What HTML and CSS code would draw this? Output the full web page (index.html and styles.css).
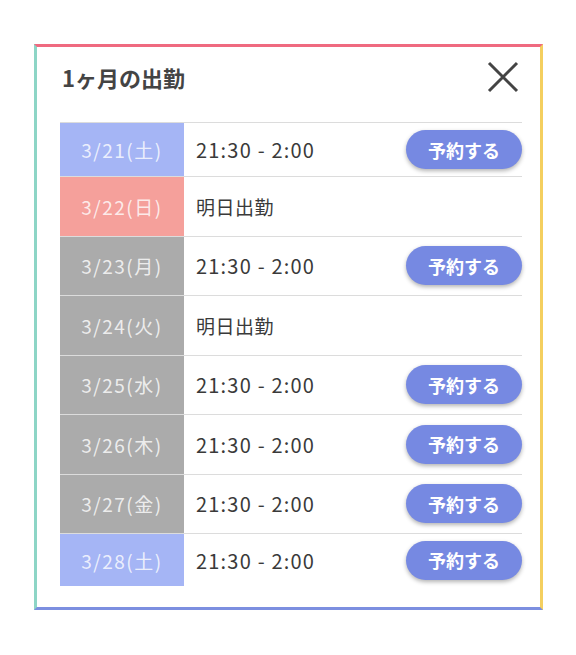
FILE: index.html
```html
<!DOCTYPE html>
<html lang="ja">

<head>
    <meta charset="UTF-8">
    <meta name="viewport" content="width=device-width, initial-scale=1.0">
    <title>1ヶ月の出勤</title>
    <link rel="stylesheet" href="styles.css">
</head>

<body>
    <div class="modal">
        <div class="modal-header">
            <h2 class="modal-title">1ヶ月の出勤</h2>
            <button class="close-button" title="閉じる">
                <svg width="32" height="32" viewBox="0 0 32 32">
                    <path d="M2 2 L30 30 M30 2 L2 30" stroke="#444" stroke-width="3" fill="none" />
                </svg>
            </button>
        </div>

        <!-- 出勤スケジュール -->
        <div class="schedule">
            <div class="row first">
                <div class="date sat">3/21(土)</div>
                <div class="time">21:30 - 2:00</div>
                <button class="reserve">予約する</button>
            </div>
            <div class="row">
                <div class="date sun">3/22(日)</div>
                <div class="time note">明日出勤</div>
            </div>
            <div class="row">
                <div class="date">3/23(月)</div>
                <div class="time">21:30 - 2:00</div>
                <button class="reserve">予約する</button>
            </div>
            <div class="row">
                <div class="date">3/24(火)</div>
                <div class="time note">明日出勤</div>
            </div>
            <div class="row">
                <div class="date">3/25(水)</div>
                <div class="time">21:30 - 2:00</div>
                <button class="reserve">予約する</button>
            </div>
            <div class="row">
                <div class="date">3/26(木)</div>
                <div class="time">21:30 - 2:00</div>
                <button class="reserve">予約する</button>
            </div>
            <div class="row">
                <div class="date">3/27(金)</div>
                <div class="time">21:30 - 2:00</div>
                <button class="reserve">予約する</button>
            </div>
            <div class="row last">
                <div class="date sat">3/28(土)</div>
                <div class="time">21:30 - 2:00</div>
                <button class="reserve">予約する</button>
            </div>
        </div>
    </div>
</body>

</html>
```

FILE: styles.css
```css
body {
    margin: 0;
    background-color: #fff;
    font-family: "Noto Sans CJK JP", sans-serif;
    color: #333;
}

.modal {
    box-sizing: border-box;
    width: 509px;
    margin: 44px 0 0 34px;
    padding: 0 18px 21px 23px;
    border-style: solid;
    border-width: 3px;
    border-top-color: #ef6a80;
    border-left-color: #8dd5c6;
    border-right-color: #f4cf5f;
    border-bottom-color: #7c8fe0;
}

.modal-header {
    display: flex;
    align-items: center;
    justify-content: space-between;
    height: 75px;
    padding-bottom: 15px;
    box-sizing: border-box;
}

.modal-title {
    margin: 0;
    font-size: 22px;
    font-weight: bold;
    color: #444;
    padding-left: 2px;
}

.close-button {
    background: none;
    border: none;
    padding: 0;
    margin-right: 3px;
    cursor: pointer;
    display: flex;
}

.schedule {
    display: flex;
    flex-direction: column;
}

.row {
    display: flex;
    align-items: center;
    height: 59.5px;
    border-top: 1px solid #dcdcdc;
    box-sizing: border-box;
}

.row.first {
    height: 54px;
}

.row.last {
    height: 53px;
}

.date {
    width: 124px;
    align-self: stretch;
    display: flex;
    align-items: center;
    justify-content: center;
    background-color: #ababab;
    color: rgba(255, 255, 255, 0.8);
    font-size: 19px;
    letter-spacing: 1.5px;
}

.date.sat {
    background-color: #a5b5f5;
}

.date.sun {
    background-color: #f5a09b;
}

.time {
    flex: 1;
    padding-left: 12px;
    font-size: 20px;
    letter-spacing: 1.2px;
    color: #3a3a3a;
}

.time.note {
    font-size: 19px;
    letter-spacing: 0.5px;
}

.reserve {
    width: 116px;
    height: 39px;
    border: none;
    border-radius: 20px;
    background-color: #7689e2;
    color: #fff;
    font-family: inherit;
    font-size: 18px;
    font-weight: bold;
    box-shadow: 0 2px 4px rgba(0, 0, 0, 0.3);
    cursor: pointer;
}
```
